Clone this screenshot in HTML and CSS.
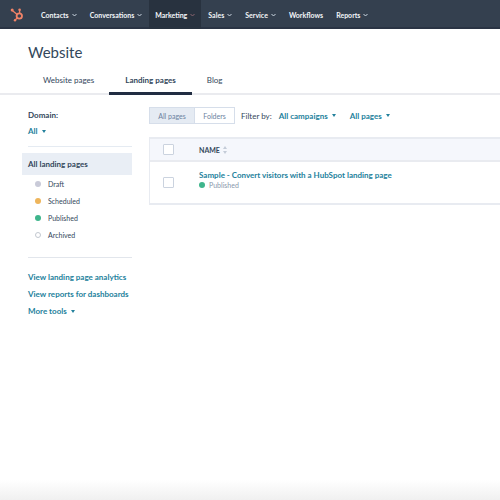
FILE: index.html
```html
<!DOCTYPE html>
<html lang="en">
<head>
<meta charset="utf-8">
<title>Website</title>
<link rel="stylesheet" href="styles.css">
</head>
<body>
<nav class="topbar">
  <a class="logo" href="#" aria-label="HubSpot">
    <svg viewBox="0 0 14 14" width="14" height="14" fill="none" stroke="#f08368">
      <circle cx="9.3" cy="8" r="2.7" stroke-width="1.8"/>
      <path d="M9.6 5V2M7.2 6.400000 2 2.200000M7.2 10 5.2 12" stroke-width="1.3"/>
      <g fill="#f08368" stroke="none"><circle cx="9.6" cy="1.7" r="1.3"/><circle cx="2.200000" cy="2" r="1.5"/><circle cx="5" cy="12.2" r="1.200000"/></g>
    </svg>
  </a>
  <button class="nav-item">Contacts <svg class="chev" viewBox="0 0 5 4"><path d="M.5 1 2.5 3 4.5 1"/></svg></button>
  <button class="nav-item">Conversations <svg class="chev" viewBox="0 0 5 4"><path d="M.5 1 2.5 3 4.5 1"/></svg></button>
  <button class="nav-item current">Marketing <svg class="chev" viewBox="0 0 5 4"><path d="M.5 1 2.5 3 4.5 1"/></svg></button>
  <button class="nav-item">Sales <svg class="chev" viewBox="0 0 5 4"><path d="M.5 1 2.5 3 4.5 1"/></svg></button>
  <button class="nav-item">Service <svg class="chev" viewBox="0 0 5 4"><path d="M.5 1 2.5 3 4.5 1"/></svg></button>
  <a class="nav-item" href="#">Workflows</a>
  <button class="nav-item">Reports <svg class="chev" viewBox="0 0 5 4"><path d="M.5 1 2.5 3 4.5 1"/></svg></button>
</nav>
<header class="page-head">
  <h1>Website</h1>
  <nav class="tabs">
    <a href="#">Website pages</a>
    <a class="active" href="#">Landing pages</a>
    <a href="#">Blog</a>
  </nav>
</header>
<div class="layout">
  <aside class="sidebar">
    <div class="domain">
      <span class="label" id="domain">Domain:</span>
      <button class="drop" aria-describedby="domain">All<i class="caret"></i></button>
    </div>
    <a class="all" href="#">All landing pages</a>
    <ul class="statuses">
      <li><a href="#"><i class="dot draft"></i>Draft</a></li>
      <li><a href="#"><i class="dot scheduled"></i>Scheduled</a></li>
      <li><a href="#"><i class="dot published"></i>Published</a></li>
      <li><a href="#"><i class="dot archived"></i>Archived</a></li>
    </ul>
    <div class="links">
      <a href="#">View landing page analytics</a>
      <a href="#">View reports for dashboards</a>
      <button class="drop">More tools<i class="caret"></i></button>
    </div>
  </aside>
  <main class="content">
    <div class="toolbar">
      <div class="toggle">
        <button class="on">All pages</button>
        <button>Folders</button>
      </div>
      <span class="filter-label">Filter by:</span>
      <button class="drop">All campaigns<i class="caret"></i></button>
      <button class="drop">All pages<i class="caret"></i></button>
    </div>
    <table>
      <thead>
        <tr>
          <th class="check"><input type="checkbox" aria-label="Select all pages"></th>
          <th>NAME <svg class="sort" viewBox="0 0 4 8"><path d="M0 3 2 0 4 3ZM0 5 2 8 4 5Z"/></svg></th>
        </tr>
      </thead>
      <tbody>
        <tr>
          <td class="check"><input type="checkbox" aria-label="Select sample page"></td>
          <td class="page">
            <a class="page-link" href="#">Sample - Convert visitors with a HubSpot landing page</a>
            <span class="state"><i class="dot published"></i>Published</span>
          </td>
        </tr>
      </tbody>
    </table>
  </main>
</div>
</body>
</html>
```
FILE: styles.css
```css
* {
  box-sizing: border-box;
}

body {
  margin: 0;
  min-height: 100vh;
  font: 8px/10px Lato, "Liberation Sans", sans-serif;
  color: #33475b;
  background: linear-gradient(to top, #f0f0f0, #fff 20px);
}

button {
  font: inherit;
  color: inherit;
  padding: 0;
  border: 0;
  background: none;
}

a {
  color: inherit;
  text-decoration: none;
}

.topbar {
  display: flex;
  height: 29px;
  font-size: 7px;
  background: #34404f;
  border-bottom: 2px solid #2a3444;
}

.logo {
  width: 35px;
  padding: 8px 0 0 10px;
}

.nav-item {
  display: flex;
  align-items: center;
  gap: 3px;
  padding: 2px 6px 0;
  margin-right: 1px;
  font-weight: 700;
  color: #f3f6f9;
}

.nav-item.current {
  background: #28323f;
  margin-bottom: -2px;
  padding-bottom: 2px;
}

.chev {
  width: 5px;
  height: 4px;
  fill: none;
  stroke: #cbd6e2;
}

.current .chev {
  stroke: #8b6470;
}

.page-head {
  background: #fff;
  border-bottom: 2px solid #eaebef;
}

h1 {
  margin: 0;
  padding: 13px 28px 0;
  font-size: 15px;
  line-height: 20px;
  font-weight: 400;
}

.tabs {
  display: flex;
  padding: 6px 28px 0;
  margin-bottom: -2px;
}

.tabs a {
  padding: 7px 15px;
  border-bottom: 3px solid transparent;
}

.tabs .active {
  padding: 7px 16px;
  font-weight: 700;
  border-color: #212d42;
}

.layout {
  display: flex;
  gap: 17px;
  padding: 12px 0 0 22px;
}

.sidebar {
  flex: 0 0 110px;
}

.domain {
  display: flex;
  flex-direction: column;
  align-items: flex-start;
  gap: 6px;
  margin-left: 6px;
  padding: 3px 0 10px;
  border-bottom: 1px solid #e5ebf2;
}

.label {
  font-weight: 700;
}

.drop {
  display: flex;
  align-items: center;
  gap: 4px;
  font-weight: 700;
  color: #23819c;
}

.caret {
  border: 2px solid transparent;
  border-top: 3px solid #23819c;
  border-bottom: 0;
}

.all {
  display: block;
  margin-top: 6px;
  padding: 6px;
  font-weight: 700;
  background: #e9eef5;
}

.statuses {
  list-style: none;
  margin: 0 0 0 6px;
  padding: 0 7px 14px;
  font-size: 7px;
  border-bottom: 1px solid #e2e6ec;
}

.statuses a {
  display: flex;
  align-items: center;
  height: 17px;
  gap: 7px;
}

.dot {
  flex: none;
  width: 6px;
  height: 6px;
  border-radius: 50%;
}

.draft {
  background: #c9cad8;
}

.scheduled {
  background: #eeb55b;
}

.published {
  background: #3fb58c;
}

.archived {
  border: 1px solid #c3c8d0;
}

.links {
  display: flex;
  flex-direction: column;
  align-items: flex-start;
  gap: 7px;
  padding: 14px 0 0 6px;
  font-weight: 700;
  color: #23819c;
  white-space: nowrap;
}

.content {
  flex: 1;
}

.toolbar {
  display: flex;
  align-items: center;
}

.toggle {
  display: flex;
  margin-right: 6px;
  font-size: 7px;
  border: 1px solid #d6deea;
}

.toggle button {
  width: 39px;
  height: 15px;
  color: #6b82a0;
}

.toggle .on {
  width: 45px;
  background: #e5ebf3;
  border-right: 1px solid #d6deea;
}

.filter-label {
  margin-right: 7px;
}

.toolbar .drop + .drop {
  margin-left: 14px;
}

table {
  width: 100%;
  margin-top: 13px;
  border: 1px solid #e8ebf1;
  border-width: 2px 0 2px 1px;
  border-collapse: separate;
  border-spacing: 0;
}

th,
td {
  padding: 0;
  text-align: left;
  vertical-align: middle;
}

th {
  height: 23px;
  font-size: 7px;
  font-weight: 700;
  background: #f5f7fc;
  border-bottom: 2px solid #e9ebf0;
}

td {
  height: 41px;
}

.page {
  padding-bottom: 6px;
}

.check {
  width: 49px;
  padding-left: 13px;
}

input {
  display: block;
  appearance: none;
  width: 11px;
  height: 11px;
  margin: 0;
  background: #fff;
  border: 1px solid #cbd3df;
  border-radius: 1px;
}

.sort {
  width: 4px;
  height: 8px;
  margin-left: 1px;
  fill: #c4ccd8;
  vertical-align: -1px;
}

.page-link {
  display: block;
  font-weight: 700;
  color: #23819c;
}

.state {
  display: flex;
  align-items: center;
  gap: 4px;
  font-size: 7px;
  color: #8898ac;
}
```
